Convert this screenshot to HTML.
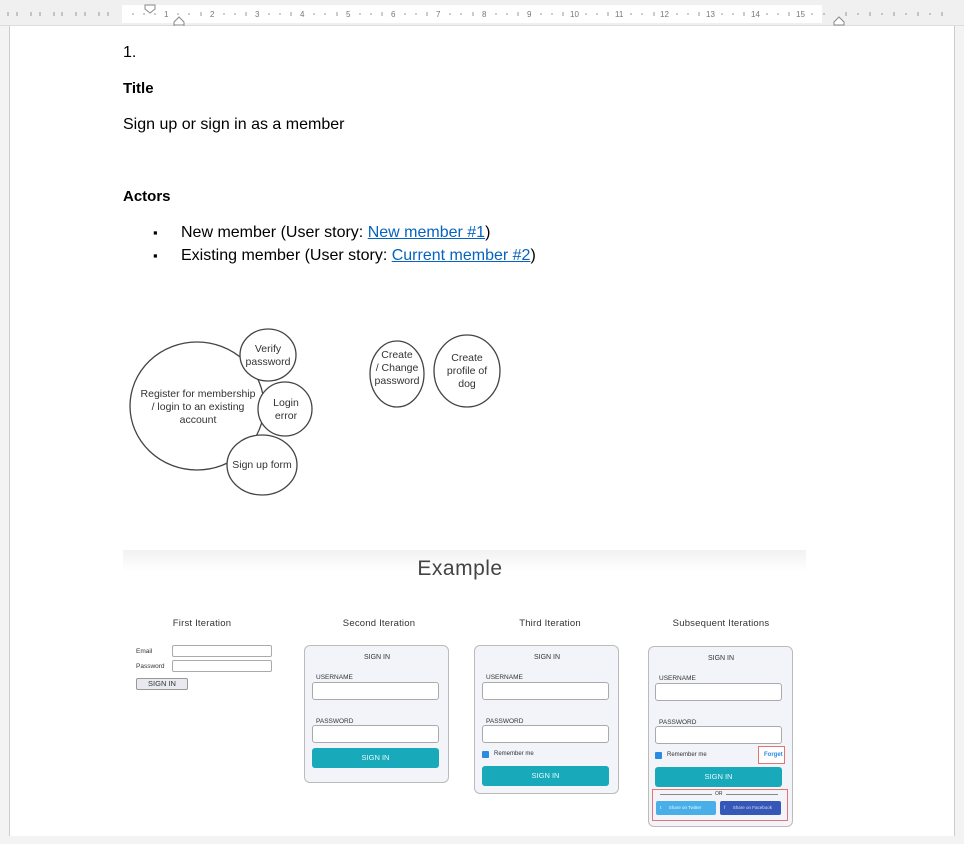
<!DOCTYPE html>
<html><head><meta charset="utf-8"><style>
*{margin:0;padding:0;box-sizing:border-box}
body{width:964px;height:844px;overflow:hidden;background:#f3f3f3;font-family:"Liberation Sans",sans-serif;position:relative}
.a{position:absolute}
.t{position:absolute;font-size:16px;color:#000;white-space:nowrap;line-height:18px}
a{color:#0563c1;text-decoration:underline}
.h{position:absolute;font-size:9.5px;color:#333;transform:translateX(-50%);white-space:nowrap;letter-spacing:0.2px}
.card{position:absolute;background:#f2f4fa;border:1.5px solid #bbb;border-radius:6px}
.lab{position:absolute;font-size:6.5px;color:#333;white-space:nowrap}
.inp{position:absolute;background:#fff;border:1.3px solid #aaa;border-radius:3px}
.btn{position:absolute;background:#18aabb;border-radius:3px;color:#e8f8fa;font-size:7.5px;text-align:center}
</style></head><body>
<div class="a" style="left:0;top:0;width:964px;height:26px;background:#f0f0f0;border-bottom:1px solid #ddd"></div>
<div class="a" style="left:122px;top:5px;width:700px;height:18px;background:#fff"></div>
<svg class="a" style="left:0;top:0" width="964" height="30">
<g fill="#777" font-family="Liberation Sans" font-size="8">
<text x="164" y="17">1</text><text x="210" y="17">2</text><text x="255" y="17">3</text><text x="300" y="17">4</text><text x="346" y="17">5</text><text x="391" y="17">6</text><text x="436" y="17">7</text><text x="482" y="17">8</text><text x="527" y="17">9</text><text x="570" y="17">10</text><text x="615" y="17">11</text><text x="660" y="17">12</text><text x="706" y="17">13</text><text x="751" y="17">14</text><text x="796" y="17">15</text>
</g>
<g stroke="#999" stroke-width="1">
<path d="M8 12v4M17 12v4M31 12v4M40 12v4M54 12v4M62 12v4M76 12v4M85 12v4M99 12v4M108 12v4M133 13v2M144 13v2M155 13v2M178 13v2M189 13v2M201 12v4M224 13v2M235 13v2M246 12v4M269 13v2M280 13v2M291 12v4M314 13v2M325 13v2M337 12v4M360 13v2M371 13v2M382 12v4M405 13v2M416 13v2M427 12v4M450 13v2M461 13v2M473 12v4M496 13v2M507 13v2M518 12v4M541 13v2M552 13v2M563 12v4M586 13v2M597 13v2M608 12v4M631 13v2M642 13v2M654 12v4M677 13v2M688 13v2M699 12v4M722 13v2M733 13v2M744 12v4M767 13v2M778 13v2M789 12v4M812 13v2M824 13v2M846 12v4M858 13v2M870 12v4M882 13v2M894 12v4M906 13v2M918 12v4M930 13v2M942 12v4"/>
</g>
<path d="M145 5h10v4l-5 4-5-4z" fill="#fff" stroke="#888"/>
<path d="M174 22l5-5 5 5v3h-10z M174 25h10v5h-10z" fill="#fff" stroke="#888"/>
<path d="M834 22l5-5 5 5v3h-10z" fill="#fff" stroke="#888"/>
</svg>
<div class="a" style="left:9px;top:26px;width:946px;height:810px;background:#fff;border-left:1px solid #ccc;border-right:1px solid #ccc"></div>
<div class="t" style="left:123px;top:44px">1.</div>
<div class="t" style="left:123px;top:80px;font-weight:bold;font-size:15px">Title</div>
<div class="t" style="left:123px;top:116px">Sign up or sign in as a member</div>
<div class="t" style="left:123px;top:188px;font-weight:bold;font-size:15px">Actors</div>
<div class="t" style="left:153px;top:224px;font-size:13px">▪</div>
<div class="t" style="left:181px;top:224px">New member (User story: <a>New member #1</a>)</div>
<div class="t" style="left:153px;top:247px;font-size:13px">▪</div>
<div class="t" style="left:181px;top:247px">Existing member (User story: <a>Current member #2</a>)</div>
<svg class="a" style="left:0;top:0" width="964" height="520">
<g fill="#fff" stroke="#444" stroke-width="1.3">
<ellipse cx="197" cy="406" rx="67" ry="64"/>
<ellipse cx="268" cy="355" rx="28" ry="26"/>
<ellipse cx="285" cy="409" rx="27" ry="27"/>
<ellipse cx="262" cy="465" rx="35" ry="30"/>
<ellipse cx="397" cy="374" rx="27" ry="33"/>
<ellipse cx="467" cy="371" rx="33" ry="36"/>
</g>
<g font-family="Liberation Sans" font-size="10.5" fill="#333" text-anchor="middle">
<text x="198" y="397">Register for membership</text><text x="198" y="410">/ login to an existing</text><text x="198" y="423">account</text>
<text x="268" y="352">Verify</text><text x="268" y="365">password</text>
<text x="286" y="406">Login</text><text x="286" y="419">error</text>
<text x="262" y="468">Sign up form</text>
<text x="397" y="358">Create</text><text x="397" y="371">/ Change</text><text x="397" y="384">password</text>
<text x="467" y="361">Create</text><text x="467" y="374">profile of</text><text x="467" y="387">dog</text>
</g>
</svg>
<div class="a" style="left:123px;top:550px;width:683px;height:286px;background:#fff"></div>
<div class="a" style="left:123px;top:550px;width:683px;height:22px;background:linear-gradient(#f2f2f2,#fff)"></div>
<div class="a" style="left:460px;top:557px;transform:translateX(-50%);font-size:21px;color:#444;letter-spacing:0.5px">Example</div>
<div class="h" style="left:202px;top:618px">First Iteration</div>
<div class="h" style="left:379px;top:618px">Second Iteration</div>
<div class="h" style="left:550px;top:618px">Third Iteration</div>
<div class="h" style="left:721px;top:618px">Subsequent Iterations</div>
<div class="lab" style="left:136px;top:648px">Email</div>
<div class="inp" style="left:172px;top:645px;width:100px;height:12px;border-radius:2px"></div>
<div class="lab" style="left:136px;top:663px">Password</div>
<div class="inp" style="left:172px;top:660px;width:100px;height:12px;border-radius:2px"></div>
<div class="a" style="left:136px;top:678px;width:52px;height:12px;background:#e8eaf0;border:1px solid #999;border-radius:2px;font-size:7.5px;text-align:center;line-height:10px;color:#333">SIGN IN</div>
<div class="card" style="left:304px;top:645px;width:145px;height:138px"></div>
<div class="lab" style="left:377px;top:654px;transform:translateX(-50%);font-size:7px">SIGN IN</div>
<div class="lab" style="left:316px;top:674px">USERNAME</div>
<div class="inp" style="left:312px;top:682px;width:127px;height:18px"></div>
<div class="lab" style="left:316px;top:718px">PASSWORD</div>
<div class="inp" style="left:312px;top:725px;width:127px;height:18px"></div>
<div class="btn" style="left:312px;top:748px;width:127px;height:20px;line-height:20px">SIGN IN</div>
<div class="card" style="left:474px;top:645px;width:145px;height:149px"></div>
<div class="lab" style="left:547px;top:654px;transform:translateX(-50%);font-size:7px">SIGN IN</div>
<div class="lab" style="left:486px;top:674px">USERNAME</div>
<div class="inp" style="left:482px;top:682px;width:127px;height:18px"></div>
<div class="lab" style="left:486px;top:718px">PASSWORD</div>
<div class="inp" style="left:482px;top:725px;width:127px;height:18px"></div>
<div class="a" style="left:482px;top:751px;width:7px;height:7px;background:#2a8be0;border-radius:1px"></div>
<div class="lab" style="left:494px;top:751px;font-size:6px">Remember me</div>
<div class="btn" style="left:482px;top:766px;width:127px;height:20px;line-height:20px">SIGN IN</div>
<div class="card" style="left:648px;top:646px;width:145px;height:181px"></div>
<div class="lab" style="left:721px;top:655px;transform:translateX(-50%);font-size:7px">SIGN IN</div>
<div class="lab" style="left:659px;top:675px">USERNAME</div>
<div class="inp" style="left:655px;top:683px;width:127px;height:18px"></div>
<div class="lab" style="left:659px;top:719px">PASSWORD</div>
<div class="inp" style="left:655px;top:726px;width:127px;height:18px"></div>
<div class="a" style="left:655px;top:752px;width:7px;height:7px;background:#2a8be0;border-radius:1px"></div>
<div class="lab" style="left:667px;top:752px;font-size:6px">Remember me</div>
<div class="a" style="left:758px;top:746px;width:27px;height:18px;border:1.3px solid #e57373;background:#fff"></div>
<div class="lab" style="left:764px;top:752px;font-size:6px;color:#2a8be0;font-weight:bold">Forget</div>
<div class="btn" style="left:655px;top:767px;width:127px;height:20px;line-height:20px">SIGN IN</div>
<div class="a" style="left:652px;top:789px;width:136px;height:32px;border:1.3px solid #e57373"></div>
<div class="a" style="left:660px;top:794px;width:52px;height:1px;background:#888"></div>
<div class="lab" style="left:715px;top:791px;font-size:5px">OR</div>
<div class="a" style="left:726px;top:794px;width:52px;height:1px;background:#888"></div>
<div class="a" style="left:656px;top:801px;width:60px;height:14px;background:#4aaee8;border-radius:2px;color:#dff;font-size:4.5px;line-height:14px;padding-left:4px">t &nbsp;&nbsp;&nbsp;&nbsp; Share on Twitter</div>
<div class="a" style="left:720px;top:801px;width:61px;height:14px;background:#3558b8;border-radius:2px;color:#dde;font-size:4.5px;line-height:14px;padding-left:4px">f &nbsp;&nbsp;&nbsp;&nbsp; Share on Facebook</div>
</body></html>
